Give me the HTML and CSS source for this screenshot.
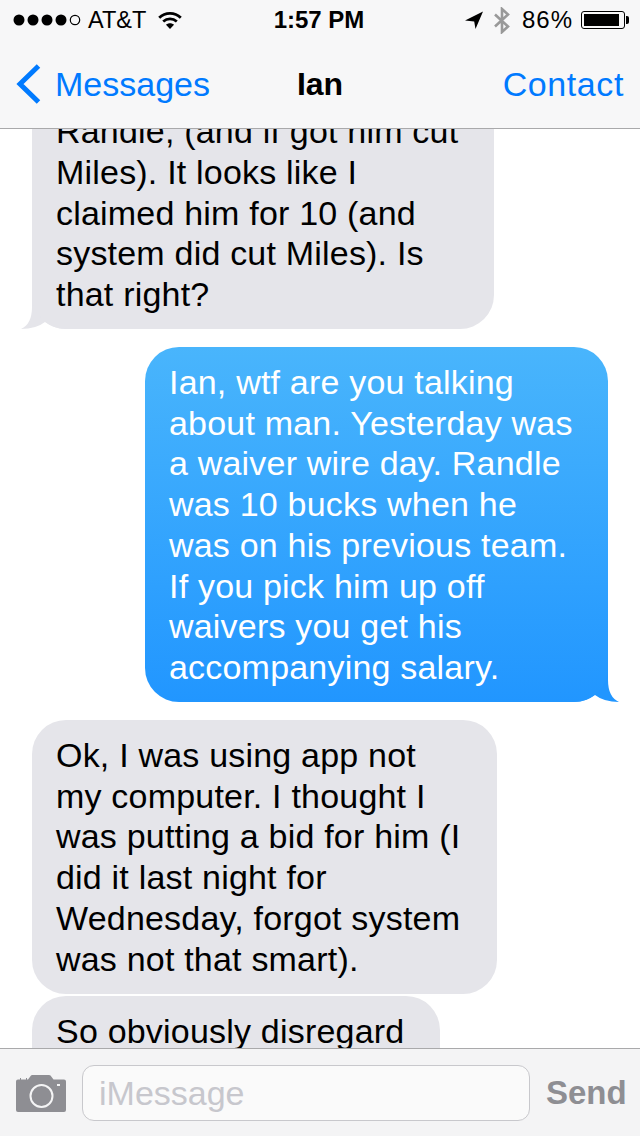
FILE: index.html
```html
<!DOCTYPE html>
<html>
<head>
  <title>Ian</title>
  <link rel="stylesheet" href="styles.css">
</head>
<body>
  <div id="phone">
    <div id="header">
      <div class="status-bar">
        <div class="status-left">
          <svg class="signal" width="68" height="12" viewBox="0 0 68 12">
            <circle cx="6" cy="6" r="5.5"/><circle cx="20" cy="6" r="5.5"/><circle cx="34" cy="6" r="5.5"/><circle cx="48" cy="6" r="5.5"/>
            <circle cx="62" cy="6" r="4.7" fill="none" stroke="#000" stroke-width="1.2"/>
          </svg>
          <span class="carrier">AT&amp;T</span>
          <svg class="wifi" width="24" height="18" viewBox="0 0 24 18" fill="none" stroke="#000" stroke-width="2.8">
            <path d="M1.2 6.8C7.200 1 16.800 1 22.800 6.800"/>
            <path d="M5.200 10.500C9.200 7 14.800 7 18.800 10.500"/>
            <path d="M12 18L8 13.800C10.200 11.800 13.800 11.800 16 13.800Z" fill="#000" stroke="none"/>
          </svg>
        </div>
        <div class="status-time">1:57 PM</div>
        <div class="status-right">
          <svg width="18" height="18" viewBox="0 0 18 18"><path d="M0 9.5L18 0.5L10.5 18L9.2 10.5Z"/></svg>
          <svg class="bluetooth" width="16" height="27" viewBox="0 0 16 27" fill="none" stroke="#999" stroke-width="2.6"><path d="M1 7.5L14 19.5L8 25V2L14 7.5L1 19.5"/></svg>
          <span class="battery-text">86%</span>
          <div class="battery"><div class="battery-level"></div></div>
        </div>
      </div>
      <div class="nav-bar">
        <div class="nav-back">
          <svg width="26" height="40" viewBox="0 0 26 40" fill="none" stroke="#007aff" stroke-width="5"><path d="M22.5 2L4 20L22.5 38"/></svg>
          <span>Messages</span>
        </div>
        <div class="nav-title">Ian</div>
        <div class="nav-action">Contact</div>
      </div>
    </div>

    <div id="chat">
      <div class="bubble received first">
        Randle, (and if got him cut<br>Miles). It looks like I<br>claimed him for 10 (and<br>system did cut Miles). Is<br>that right?
        <svg class="tail tail-left" width="46" height="34" viewBox="0 0 46 34"><path d="M46 34Q33 34 24 27Q15 34 0 34Q11 29 11 12V0H46Z"/></svg>
      </div>
      <div class="bubble sent">
        Ian, wtf are you talking<br>about man. Yesterday was<br>a waiver wire day. Randle<br>was 10 bucks when he<br>was on his previous team.<br>If you pick him up off<br>waivers you get his<br>accompanying salary.
        <svg class="tail tail-right" width="46" height="34" viewBox="0 0 46 34"><path d="M0 34Q13 34 22 27Q31 34 46 34Q35 29 35 12V0H0Z"/></svg>
      </div>
      <div class="bubble received third">
        Ok, I was using app not<br>my computer. I thought I<br>was putting a bid for him (I<br>did it last night for<br>Wednesday, forgot system<br>was not that smart).
      </div>
      <div class="bubble received fourth">
        So obviously disregard
      </div>
    </div>

    <div id="footer">
      <svg class="camera" width="50" height="37" viewBox="0 0 50 37">
        <path fill="#8e8e93" d="M2 4.500H4V3H11V4.500H12L15 0.500Q15.500 0 16 0H33Q34 0 34.500 0.500L37.500 4.500H48Q50 4.500 50 6.500V35Q50 37 48 37H2Q0 37 0 35V6.500Q0 4.500 2 4.500Z"/>
        <circle cx="25.500" cy="21" r="11" fill="none" stroke="#f4f4f5" stroke-width="2"/>
        <rect x="5" y="3" width="5" height="1.500" fill="#f4f4f5"/>
        <rect x="41" y="9" width="3" height="2" fill="#f4f4f5"/>
      </svg>
      <div class="input">iMessage</div>
      <div class="send">Send</div>
    </div>
  </div>
</body>
</html>
```

FILE: styles.css
```css
html, body { margin: 0; padding: 0; background-color: #fff; }
body { font-family: "Liberation Sans", Arial, sans-serif; color: #000; }
#phone { width: 640px; height: 1136px; display: flex; flex-direction: column; overflow: hidden; }

#header { flex: none; height: 128px; background-color: #f7f7f8; border-bottom: 1px solid #a9a9ab; }
.status-bar { height: 40px; padding: 0 12px; display: grid; grid-template-columns: 1fr auto 1fr; align-items: center; font-size: 24px; }
.status-left { display: flex; align-items: center; }
.signal { margin-left: 1px; }
.carrier { margin-left: 7px; font-size: 23.5px; }
.wifi { margin-left: 12px; }
.status-time { font-weight: bold; margin-left: -2px; }
.status-right { display: flex; align-items: center; justify-content: flex-end; }
.status-right .bluetooth { margin-left: 11px; }
.battery-text { margin-left: 12px; letter-spacing: 1px; }
.battery { margin-left: 8px; margin-right: 3px; width: 38px; height: 12px; padding: 2px; border: 1px solid #000; border-radius: 3px; position: relative; }
.battery:after { content: ""; position: absolute; right: -5px; top: 4px; width: 3px; height: 8px; background-color: #000; border-radius: 0 2px 2px 0; }
.battery-level { width: 35px; height: 100%; background-color: #000; }

.nav-bar { height: 88px; padding: 0 16px; display: grid; grid-template-columns: 1fr auto 1fr; align-items: center; font-size: 34px; color: #007aff; }
.nav-back { display: flex; align-items: center; }
.nav-back span { margin-left: 13px; }
.nav-title { font-size: 32px; font-weight: bold; color: #000; }
.nav-action { text-align: right; letter-spacing: 0.6px; }

#chat { flex: 1; min-height: 0; overflow: hidden; isolation: isolate; display: flex; flex-direction: column; align-items: flex-start; }
.bubble { position: relative; flex: none; box-sizing: border-box; padding: 15px 24px 14.4px; border-radius: 34px; font-size: 34px; letter-spacing: 0.2px; line-height: 40.7px; }
.received { margin-left: 32px; background-color: #e5e5ea; }
.first { width: 462px; margin-top: -32.9px; }
.sent { width: 463px; margin-top: 18px; margin-left: 145px; color: #fff; background: linear-gradient(#49b5fc, #2196ff); }
.third { width: 465px; margin-top: 18px; }
.fourth { width: 408px; margin-top: 2px; padding-bottom: 60px; }
/* tails sit under the bubble so they never cover its text */
.tail { position: absolute; bottom: 0; z-index: -1; fill: #e5e5ea; }
.tail-left { left: -11px; }
.tail-right { right: -11px; fill: #2196ff; }

#footer { flex: none; height: 88px; box-sizing: border-box; border-top: 1px solid #a9a9ab; background-color: #f4f4f5; display: flex; align-items: center; padding: 0 14px 0 16px; }
.camera { flex: none; margin-top: 2px; }
.input { flex: none; width: 448px; height: 56px; margin-left: 16px; padding-left: 16px; box-sizing: border-box; border: 1px solid #c8c8cc; border-radius: 12px; background-color: #fafafa; color: #c7c7cd; font-size: 34px; line-height: 54px; }
.send { margin-left: 16px; font-size: 33px; font-weight: bold; color: #8e8e93; }
```
